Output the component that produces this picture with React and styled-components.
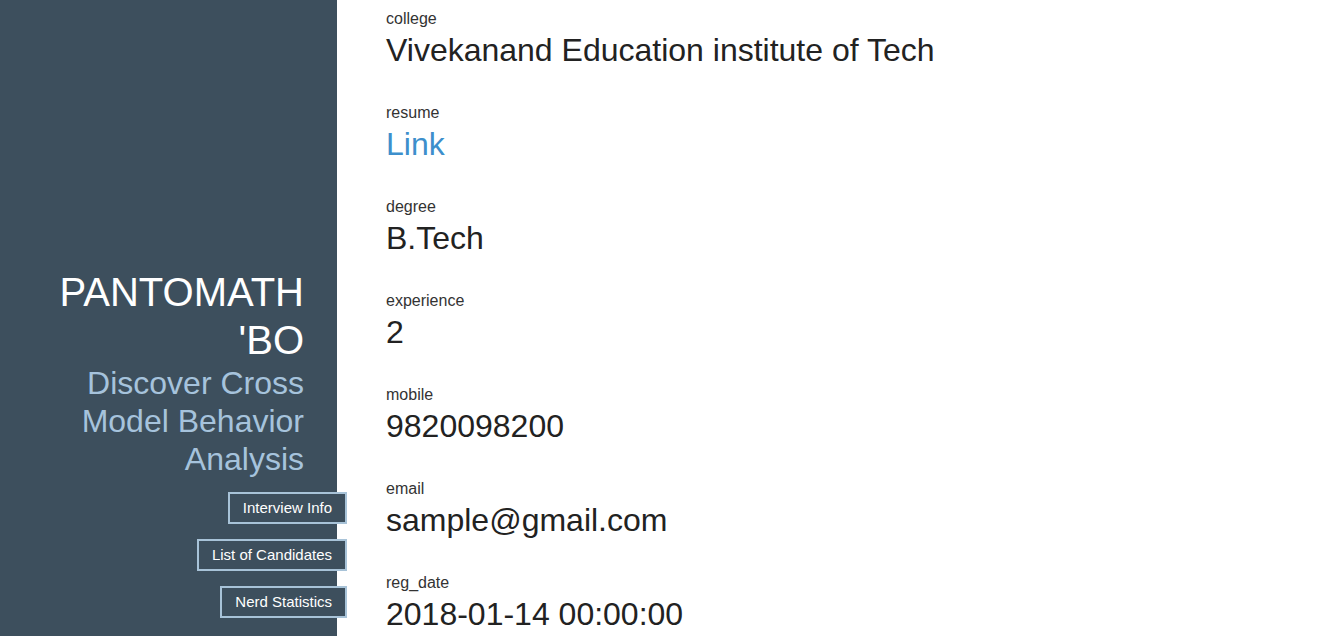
import React from "react";
import styled, { createGlobalStyle } from "styled-components";

const GlobalStyle = createGlobalStyle`
  html, body {
    margin: 0;
    padding: 0;
    height: 100%;
    background: #fff;
    font-family: "Liberation Sans", Arial, sans-serif;
  }
  #root {
    height: 100%;
  }
`;

// candidate details shown on the right
const details = [
  { label: "college", value: "Vivekanand Education institute of Tech" },
  { label: "resume", value: "Link", link: true },
  { label: "degree", value: "B.Tech" },
  { label: "experience", value: "2" },
  { label: "mobile", value: "9820098200" },
  { label: "email", value: "sample@gmail.com" },
  { label: "reg_date", value: "2018-01-14 00:00:00" },
];

const navItems = ["Interview Info", "List of Candidates", "Nerd Statistics"];

export default function App() {
  return (
    <Page>
      <GlobalStyle />
      <Sidebar>
        <Brand>PANTOMATH 'BO</Brand>
        <Tagline>Discover Cross Model Behavior Analysis</Tagline>
        <Nav>
          {navItems.map((item) => (
            <NavButton key={item}>{item}</NavButton>
          ))}
        </Nav>
      </Sidebar>
      <Content>
        {details.map((d) => (
          <Field key={d.label}>
            <Label>{d.label}</Label>
            {d.link ? (
              <ValueLink href="#resume">{d.value}</ValueLink>
            ) : (
              <Value>{d.value}</Value>
            )}
          </Field>
        ))}
      </Content>
    </Page>
  );
}

const Page = styled.div`
  display: flex;
  height: 100vh;
  overflow: hidden;
`;

const Sidebar = styled.aside`
  flex: 0 0 337px;
  box-sizing: border-box;
  display: flex;
  flex-direction: column;
  justify-content: flex-end;
  align-items: flex-end;
  padding: 0 33px 18px 33px;
  background: #3d4f5d;
  text-align: right;
  position: relative;
  z-index: 1;
`;

const Brand = styled.h1`
  margin: 0;
  font-size: 40px;
  line-height: 48px;
  font-weight: normal;
  color: #fff;
`;

const Tagline = styled.h2`
  margin: 0;
  font-size: 32px;
  line-height: 38px;
  font-weight: normal;
  color: #a6c3dc;
`;

const Nav = styled.nav`
  display: flex;
  flex-direction: column;
  align-items: flex-end;
  gap: 15px;
  margin-top: 14px;
  margin-right: -43px;
`;

const NavButton = styled.button`
  box-sizing: border-box;
  height: 32px;
  padding: 5px 13px;
  border: 2px solid #a8c3d8;
  background: #3d4f5d;
  color: #fff;
  font-family: "Liberation Sans", Arial, sans-serif;
  font-size: 15px;
  line-height: 18px;
  cursor: pointer;
`;

const Content = styled.main`
  flex: 1;
  padding: 9px 0 0 49px;
`;

const Field = styled.div`
  margin-bottom: 35px;
`;

const Label = styled.div`
  font-size: 16px;
  line-height: 20px;
  color: #333;
`;

const Value = styled.div`
  margin-top: 3px;
  font-size: 32px;
  line-height: 36px;
  color: #222;
`;

const ValueLink = styled.a`
  display: block;
  margin-top: 3px;
  font-size: 32px;
  line-height: 36px;
  color: #3d8fcc;
  text-decoration: none;
`;
